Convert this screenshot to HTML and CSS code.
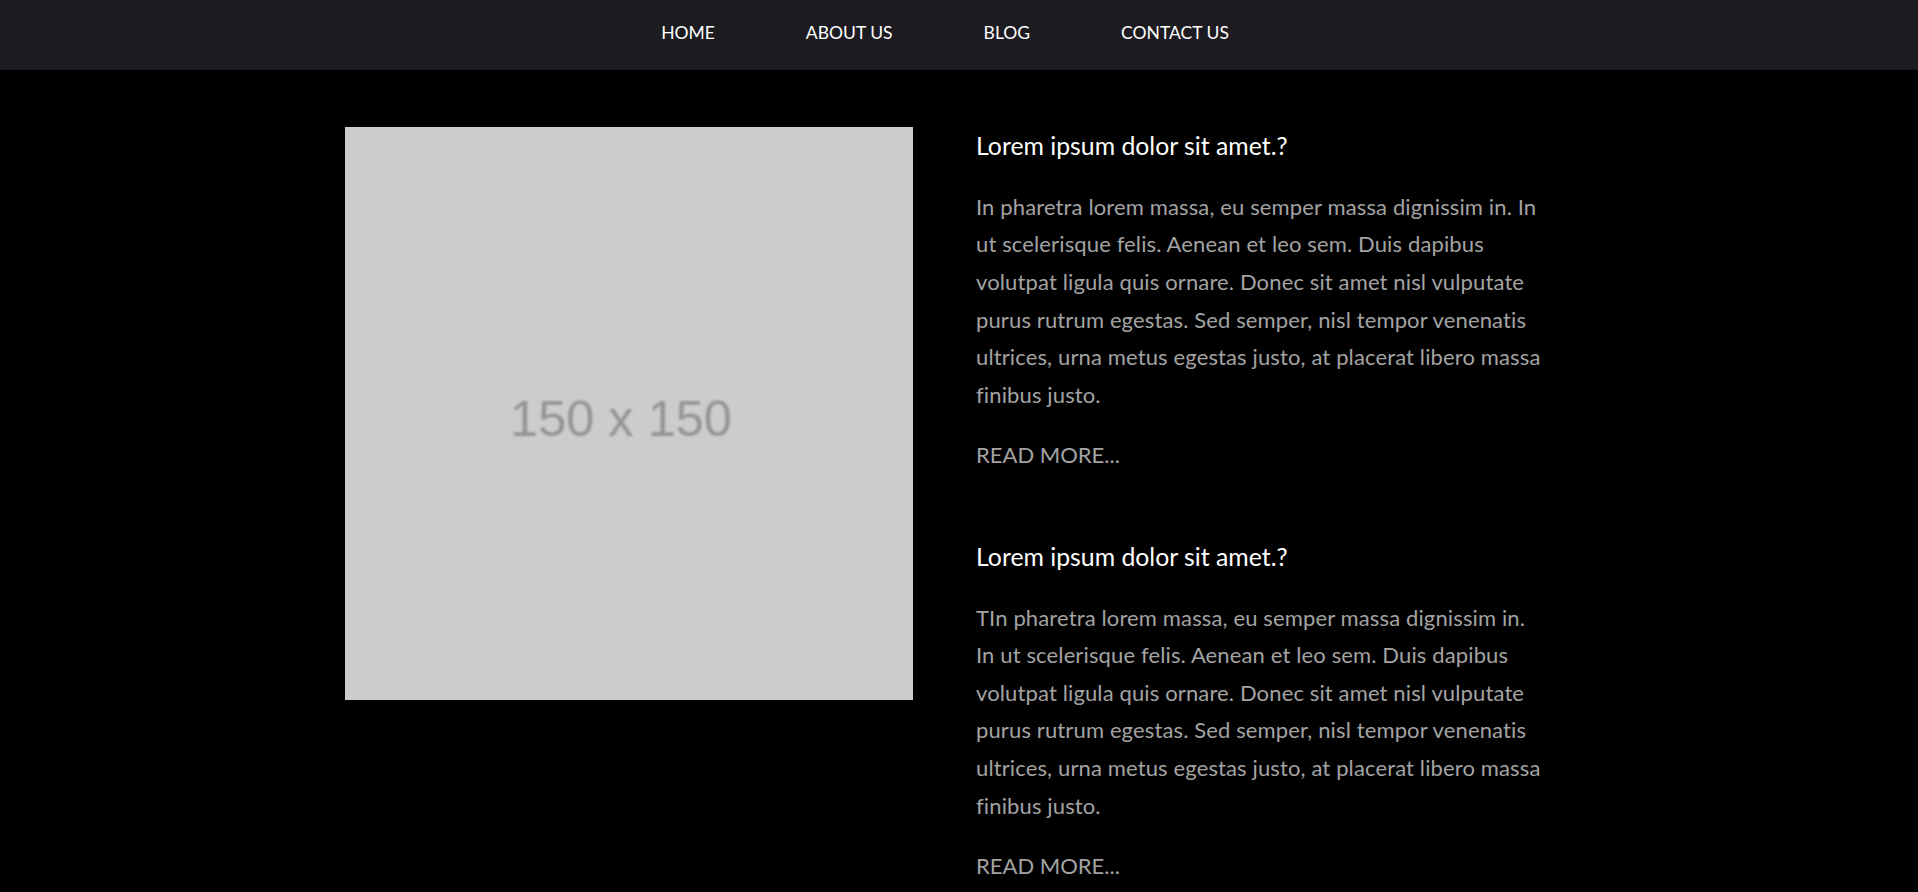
FILE: index.html
```html
<!DOCTYPE html>
<html lang="en">
<head>
<meta charset="utf-8">
<title>Blog</title>
<link rel="stylesheet" href="styles.css">
</head>
<body>
<header class="site-header">
  <nav class="nav">
    <a class="nav-link" href="#">HOME</a>
    <a class="nav-link" href="#">ABOUT US</a>
    <a class="nav-link" href="#">BLOG</a>
    <a class="nav-link" href="#">CONTACT US</a>
  </nav>
</header>
<main class="page">
  <div class="container">
    <div class="thumb"><span class="thumb-label">150 x 150</span></div>
    <div class="posts">
      <article class="post">
        <h2 class="post-title">Lorem ipsum dolor sit amet.?</h2>
        <p class="post-text">In pharetra lorem massa, eu semper massa dignissim in. In ut scelerisque felis. Aenean et leo sem. Duis dapibus volutpat ligula quis ornare. Donec sit amet nisl vulputate purus rutrum egestas. Sed semper, nisl tempor venenatis ultrices, urna metus egestas justo, at placerat libero massa finibus justo.</p>
        <a class="read-more" href="#">READ MORE...</a>
      </article>
      <article class="post">
        <h2 class="post-title">Lorem ipsum dolor sit amet.?</h2>
        <p class="post-text">TIn pharetra lorem massa, eu semper massa dignissim in. In ut scelerisque felis. Aenean et leo sem. Duis dapibus volutpat ligula quis ornare. Donec sit amet nisl vulputate purus rutrum egestas. Sed semper, nisl tempor venenatis ultrices, urna metus egestas justo, at placerat libero massa finibus justo.</p>
        <a class="read-more" href="#">READ MORE...</a>
      </article>
    </div>
  </div>
</main>
</body>
</html>
```
FILE: styles.css
```css
html, body {
  margin: 0;
  padding: 0;
  background: #000;
}
body {
  font-family: Lato, "Noto Sans", sans-serif;
  color: #a3a3a3;
}
.site-header {
  background: #1c1c20;
  height: 70px;
}
.nav {
  display: flex;
  justify-content: center;
  align-items: center;
  gap: 91px;
  height: 70px;
  padding: 0 28px 5px 0;
  box-sizing: border-box;
}
.nav-link {
  color: #fff;
  text-decoration: none;
  font-size: 17.5px;
  line-height: 1;
}
.page {
  padding: 56px 27px 80px 0;
}
.container {
  display: grid;
  grid-template-columns: 568px 570px;
  column-gap: 63px;
  justify-content: center;
  align-items: start;
}
.thumb {
  height: 573px;
  margin-top: 1px;
  background: #cccccc;
  display: flex;
  align-items: center;
  justify-content: center;
}
.thumb-label {
  font-family: "Liberation Sans", Arial, sans-serif;
  font-size: 50.5px;
  color: #959595;
  filter: blur(0.8px);
  margin: 10px 16px 0 0;
}
.posts {
  display: flex;
  flex-direction: column;
  gap: 63px;
}
.post {
  display: flex;
  flex-direction: column;
  align-items: flex-start;
}
.post-title {
  margin: 5px 0 27px;
  font-size: 24.8px;
  font-weight: 400;
  line-height: 1.2;
  color: #fff;
}
.post-text {
  margin: 0 0 23px;
  font-size: 22px;
  letter-spacing: 0.13px;
  line-height: 37.6px;
}
.read-more {
  font-size: 22px;
  line-height: 37.6px;
  color: #a3a3a3;
  text-decoration: none;
}
```
